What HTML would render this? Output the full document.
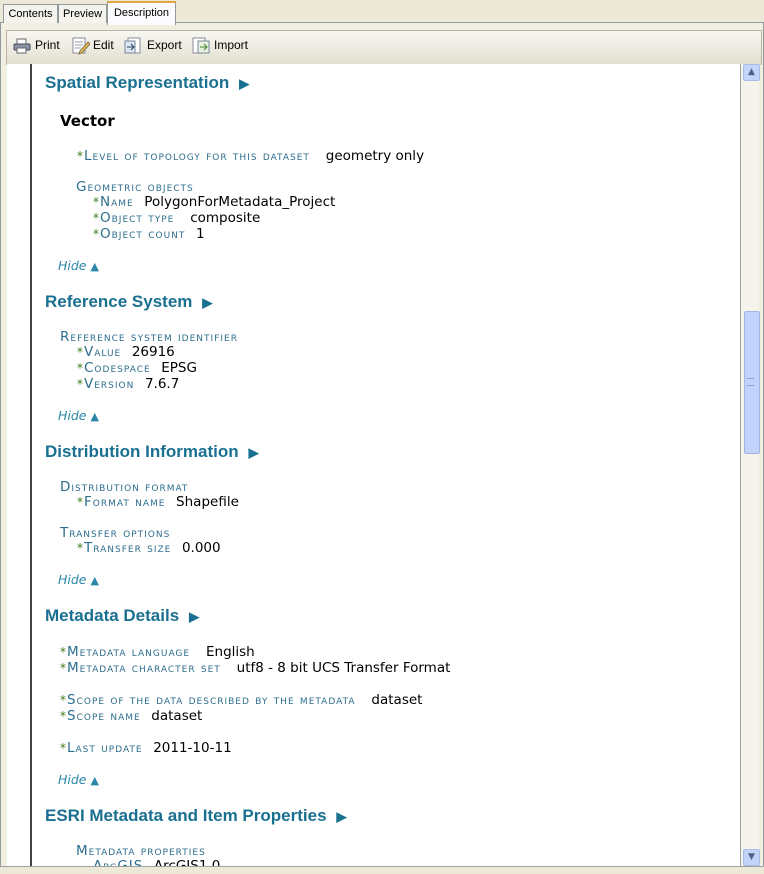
<!DOCTYPE html>
<html><head><style>
body{margin:0;width:764px;height:871px;background:#ece9d8;position:relative;overflow:hidden;font-family:"DejaVu Sans",Verdana,sans-serif}
.a{position:absolute;white-space:nowrap;line-height:16px}
.h{font-family:"Liberation Sans",sans-serif;font-weight:bold;font-size:17px;color:#1a7090}
.h span{font-size:13px;margin-left:10px}
.l{font-size:13.5px;font-variant:small-caps;color:#2d6e8e;letter-spacing:1px}
.l b{color:#3a7a1a;font-weight:normal;font-size:12px;font-variant:normal;margin-right:1px;letter-spacing:0}
.v{font-size:13.5px;color:#000;letter-spacing:0;font-variant:normal}
.hide{font-size:12.5px;font-style:italic;color:#2a85a8}
.tab{position:absolute;top:4px;height:18px;border:1px solid #919b9c;border-bottom:none;background:#f4f3ee;font:11px "Liberation Sans",sans-serif;line-height:18px;text-align:center;color:#000}
.tb{position:absolute;top:38px;font:12px "Liberation Sans",sans-serif;color:#000}
</style></head><body>
<div style="position:absolute;left:0;top:22px;width:762px;height:848px;border:1px solid #919b9c;background:#f1efe2"></div>
<div class="tab" style="left:3px;width:53px">Contents</div>
<div class="tab" style="left:58px;width:47px">Preview</div>
<div class="tab" style="left:107px;top:1px;height:22px;width:67px;background:#fcfcfe;border-top:2px solid #e6a53a;line-height:20px">Description</div>
<div style="position:absolute;left:6px;top:30px;width:754px;height:34px;background:linear-gradient(#f8f7f2,#e2dfd0);border:1px solid #b8b5a6;border-bottom:none"></div>
<svg style="position:absolute;left:13px;top:38px" width="18" height="16"><rect x="4" y="1" width="9" height="5" fill="#fff" stroke="#666"/><rect x="1" y="6" width="16" height="6" rx="1" fill="#8a94a8" stroke="#445"/><rect x="4" y="10" width="9" height="5" fill="#fff" stroke="#666"/></svg>
<div class="tb" style="left:35px">Print</div>
<svg style="position:absolute;left:72px;top:37px" width="18" height="18"><rect x="1" y="1" width="12" height="15" fill="#fff" stroke="#889"/><path d="M3 5h8M3 8h8M3 11h6" stroke="#99a"/><path d="M8 14l8-9 2 2-8 9-3 1z" fill="#e8b84a" stroke="#875"/></svg>
<div class="tb" style="left:93px">Edit</div>
<svg style="position:absolute;left:124px;top:37px" width="18" height="18"><rect x="4" y="1" width="12" height="15" fill="#fff" stroke="#889"/><rect x="1" y="4" width="10" height="12" fill="#dde6f2" stroke="#789"/><path d="M3 10h6M7 7l3 3-3 3" stroke="#246" fill="none"/></svg>
<div class="tb" style="left:147px">Export</div>
<svg style="position:absolute;left:192px;top:37px" width="18" height="18"><rect x="1" y="1" width="12" height="15" fill="#fff" stroke="#889"/><rect x="6" y="4" width="11" height="12" fill="#e8f0e0" stroke="#789"/><path d="M8 10h7M12 7l3 3-3 3" stroke="#3a8a2a" fill="none"/></svg>
<div class="tb" style="left:214px">Import</div>
<div style="position:absolute;left:7px;top:64px;width:733px;height:802px;background:#fff;border-right:1px solid #a0a0a0"></div>
<div style="position:absolute;left:30px;top:64px;width:2px;height:802px;background:#444"></div>
<div style="position:absolute;left:741px;top:64px;width:18px;height:802px;background:#f5f4ec"></div>
<div style="position:absolute;left:743px;top:64px;width:15px;height:15px;background:#c4d4f8;border:1px solid #a8bce8;border-radius:2px;font-size:9px;text-align:center;line-height:15px;color:#4d6185">&#9650;</div>
<div style="position:absolute;left:743px;top:849px;width:15px;height:15px;background:#c4d4f8;border:1px solid #a8bce8;border-radius:2px;font-size:9px;text-align:center;line-height:15px;color:#4d6185">&#9660;</div>
<div style="position:absolute;left:744px;top:311px;width:14px;height:141px;background:#c3d2fb;border:1px solid #a5b6e2;border-radius:2px"></div>
<div style="position:absolute;left:747px;top:378px;width:7px;height:6px;border-top:1px solid #8da0d8;border-bottom:1px solid #8da0d8"></div>

<div class="a h" style="left:45px;top:75px">Spatial Representation<span>&#9654;</span></div>
<div class="a" style="left:60px;top:112px;font:bold 15px 'DejaVu Sans',sans-serif;color:#000">Vector</div>
<div class="a l" style="left:77px;top:148px"><b>*</b>Level of topology for this dataset &nbsp;&nbsp;<span class="v">geometry only</span></div>
<div class="a l" style="left:76px;top:179px">Geometric objects</div>
<div class="a l" style="left:93px;top:194px"><b>*</b>Name &nbsp;<span class="v">PolygonForMetadata_Project</span></div>
<div class="a l" style="left:93px;top:210px"><b>*</b>Object type &nbsp;&nbsp;<span class="v">composite</span></div>
<div class="a l" style="left:93px;top:226px"><b>*</b>Object count &nbsp;<span class="v">1</span></div>
<div class="a hide" style="left:58px;top:258px">Hide <span style="font-style:normal;font-size:11px">&#9650;</span></div>

<div class="a h" style="left:45px;top:294px">Reference System<span>&#9654;</span></div>
<div class="a l" style="left:60px;top:329px">Reference system identifier</div>
<div class="a l" style="left:77px;top:344px"><b>*</b>Value &nbsp;<span class="v">26916</span></div>
<div class="a l" style="left:77px;top:360px"><b>*</b>Codespace &nbsp;<span class="v">EPSG</span></div>
<div class="a l" style="left:77px;top:376px"><b>*</b>Version &nbsp;<span class="v">7.6.7</span></div>
<div class="a hide" style="left:58px;top:408px">Hide <span style="font-style:normal;font-size:11px">&#9650;</span></div>

<div class="a h" style="left:45px;top:444px">Distribution Information<span>&#9654;</span></div>
<div class="a l" style="left:60px;top:479px">Distribution format</div>
<div class="a l" style="left:77px;top:494px"><b>*</b>Format name &nbsp;<span class="v">Shapefile</span></div>
<div class="a l" style="left:60px;top:525px">Transfer options</div>
<div class="a l" style="left:77px;top:540px"><b>*</b>Transfer size &nbsp;<span class="v">0.000</span></div>
<div class="a hide" style="left:58px;top:572px">Hide <span style="font-style:normal;font-size:11px">&#9650;</span></div>

<div class="a h" style="left:45px;top:608px">Metadata Details<span>&#9654;</span></div>
<div class="a l" style="left:60px;top:644px"><b>*</b>Metadata language &nbsp;&nbsp;<span class="v">English</span></div>
<div class="a l" style="left:60px;top:660px"><b>*</b>Metadata character set &nbsp;&nbsp;<span class="v">utf8 - 8 bit UCS Transfer Format</span></div>
<div class="a l" style="left:60px;top:692px"><b>*</b>Scope of the data described by the metadata &nbsp;&nbsp;<span class="v">dataset</span></div>
<div class="a l" style="left:60px;top:708px"><b>*</b>Scope name &nbsp;<span class="v">dataset</span></div>
<div class="a l" style="left:60px;top:740px"><b>*</b>Last update &nbsp;<span class="v">2011-10-11</span></div>
<div class="a hide" style="left:58px;top:772px">Hide <span style="font-style:normal;font-size:11px">&#9650;</span></div>

<div class="a h" style="left:45px;top:808px">ESRI Metadata and Item Properties<span>&#9654;</span></div>
<div class="a l" style="left:76px;top:843px">Metadata properties</div>
<div class="a l" style="left:93px;top:858px">ArcGIS &nbsp;<span class="v">ArcGIS1.0</span></div>
<div style="position:absolute;left:0;top:866px;width:764px;height:5px;background:#ece9d8;border-top:1px solid #a0a0a0"></div>
</body></html>
